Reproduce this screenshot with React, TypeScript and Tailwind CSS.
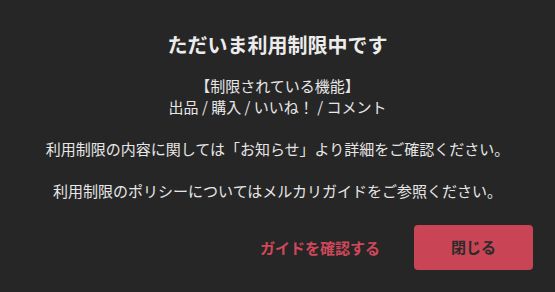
export default function App() {
  return (
    <div
      lang="ja"
      className="w-[555px] h-[292px] bg-[#262626] flex flex-col items-center text-[#e8e8e8]"
      style={{ fontFamily: '"Noto Sans CJK JP", "Noto Sans", sans-serif' }}
    >
      <h1 className="mt-[30px] text-[20px] leading-[30px] font-bold text-[#ececec]">
        ただいま利用制限中です
      </h1>
      <div className="mt-[15px] text-[15px] leading-[21px] text-center text-[#e6e6e6]">
        <p>【制限されている機能】</p>
        <p>出品 / 購入 / いいね！ / コメント</p>
        <p className="mt-[21px]">利用制限の内容に関しては「お知らせ」より詳細をご確認ください。</p>
        <p className="mt-[21px]">利用制限のポリシーについてはメルカリガイドをご参照ください。</p>
      </div>
      <div className="mt-[24px] self-stretch flex justify-end items-center pr-[22px] gap-[34px]">
        <button className="text-[15px] font-bold text-[#d0485a] leading-[45px]">
          ガイドを確認する
        </button>
        <button className="w-[119px] h-[45px] rounded-[4px] bg-[#c94555] text-[15px] font-bold text-[#2a2a2a]">
          閉じる
        </button>
      </div>
    </div>
  );
}
